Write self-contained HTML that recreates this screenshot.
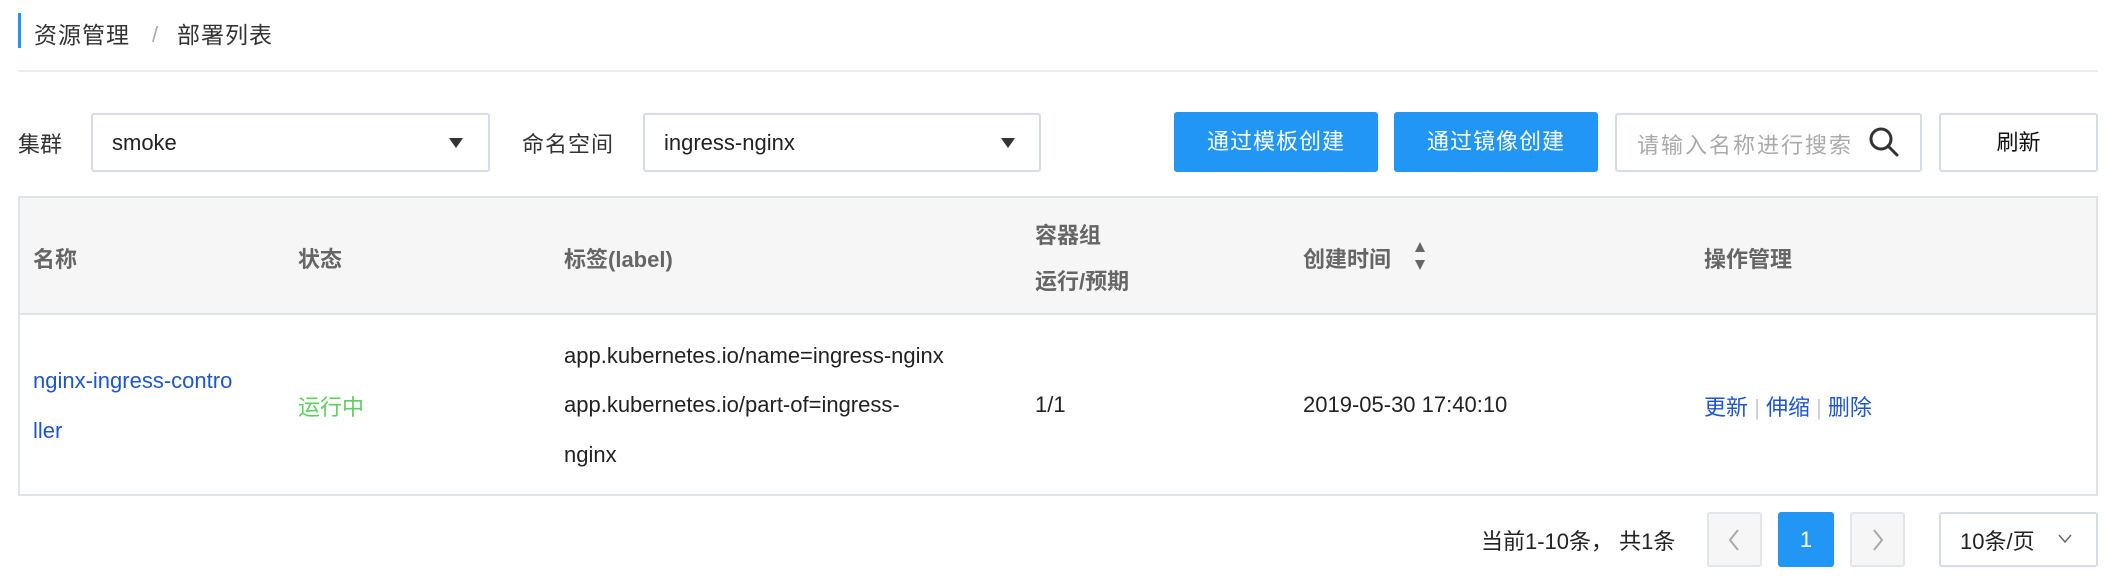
<!DOCTYPE html>
<html><head><meta charset="utf-8"><style>
*{box-sizing:border-box;margin:0;padding:0}
body{width:2124px;height:576px;background:#fff;font-family:"Liberation Sans","Noto Sans CJK SC",sans-serif;font-size:22px;color:#222;position:relative;overflow:hidden}
.a{position:absolute;white-space:nowrap}
.box{position:absolute;border:2px solid #d3dce8;border-radius:3px;background:#fff}
.btn{position:absolute;background:#2196f5;color:#fff;border-radius:3px;text-align:center;line-height:60px}
.th{position:absolute;color:#666;font-weight:bold;white-space:nowrap}
.tri{position:absolute;width:0;height:0;border-left:7px solid transparent;border-right:7px solid transparent;border-top:10px solid #333}
</style></head><body>
<div class="a" style="left:18px;top:13px;width:3px;height:35px;background:#2196f5"></div>
<div class="a" style="left:34px;top:16px;font-size:23px;color:#333;letter-spacing:1px">资源管理</div>
<div class="a" style="left:152px;top:22px;font-size:22px;color:#aaa">/</div>
<div class="a" style="left:177px;top:16px;font-size:23px;color:#333;letter-spacing:1px">部署列表</div>
<div class="a" style="left:18px;top:70px;width:2080px;height:2px;background:#ececec"></div>

<div class="a" style="left:18px;top:127px;color:#333">集群</div>
<div class="box" style="left:91px;top:113px;width:399px;height:59px"></div>
<div class="a" style="left:112px;top:130px">smoke</div>
<div class="tri" style="left:449px;top:138px"></div>
<div class="a" style="left:522px;top:127px;color:#333;letter-spacing:1px">命名空间</div>
<div class="box" style="left:643px;top:113px;width:398px;height:59px"></div>
<div class="a" style="left:664px;top:130px">ingress-nginx</div>
<div class="tri" style="left:1001px;top:138px"></div>

<div class="btn" style="left:1174px;top:112px;width:204px;height:60px;letter-spacing:1px">通过模板创建</div>
<div class="btn" style="left:1394px;top:112px;width:204px;height:60px;letter-spacing:1px">通过镜像创建</div>
<div class="box" style="left:1615px;top:113px;width:307px;height:59px"></div>
<div class="a" style="left:1637px;top:128px;color:#aaa;letter-spacing:2px">请输入名称进行搜索</div>
<svg class="a" style="left:1868px;top:126px" width="32" height="32" viewBox="0 0 32 32"><circle cx="13" cy="13" r="10" fill="none" stroke="#333" stroke-width="3"/><path d="M20 20 L29 29" stroke="#333" stroke-width="3" stroke-linecap="round"/></svg>
<div class="box" style="left:1939px;top:113px;width:159px;height:59px;text-align:center;line-height:55px;color:#111">刷新</div>

<div class="a" style="left:18px;top:196px;width:2080px;height:300px;border:2px solid #dfe3e8"></div>
<div class="a" style="left:20px;top:198px;width:2076px;height:117px;background:#f6f6f6;border-bottom:2px solid #dfe3e8"></div>
<div class="th" style="left:33px;top:242px">名称</div>
<div class="th" style="left:298px;top:242px">状态</div>
<div class="th" style="left:564px;top:242px">标签(label)</div>
<div class="th" style="left:1035px;top:218px">容器组</div>
<div class="th" style="left:1035px;top:264px">运行/预期</div>
<div class="th" style="left:1303px;top:242px">创建时间</div>
<svg class="a" style="left:1412px;top:240px" width="16" height="32"><path d="M8 2 L13 12 L3 12Z M8 30 L13 20 L3 20Z" fill="#666"/></svg>
<div class="th" style="left:1704px;top:242px">操作管理</div>

<div class="a" style="left:33px;top:368px;color:#1f55cc">nginx-ingress-contro</div>
<div class="a" style="left:33px;top:418px;color:#1f55cc">ller</div>
<div class="a" style="left:298px;top:390px;color:#5fcf5f">运行中</div>
<div class="a" style="left:564px;top:343px">app.kubernetes.io/name=ingress-nginx</div>
<div class="a" style="left:564px;top:392px">app.kubernetes.io/part-of=ingress-</div>
<div class="a" style="left:564px;top:442px">nginx</div>
<div class="a" style="left:1035px;top:392px">1/1</div>
<div class="a" style="left:1303px;top:392px">2019-05-30 17:40:10</div>
<div class="a" style="left:1704px;top:390px;color:#1f55cc">更新 <span style="color:#ccc">|</span> 伸缩 <span style="color:#ccc">|</span> 删除</div>

<div class="a" style="left:1481px;top:524px;color:#222">当前1-10条， 共1条</div>
<div class="box" style="left:1707px;top:512px;width:55px;height:55px;background:#f6f6f6;border-color:#e2e5ea"></div>
<svg class="a" style="left:1726px;top:528px" width="16" height="24"><path d="M12 2 L4 12 L12 22" fill="none" stroke="#aaa" stroke-width="2"/></svg>
<div class="btn" style="left:1778px;top:512px;width:56px;height:55px;line-height:55px">1</div>
<div class="box" style="left:1850px;top:512px;width:55px;height:55px;background:#f6f6f6;border-color:#e2e5ea"></div>
<svg class="a" style="left:1870px;top:528px" width="16" height="24"><path d="M4 2 L12 12 L4 22" fill="none" stroke="#aaa" stroke-width="2"/></svg>
<div class="box" style="left:1939px;top:512px;width:159px;height:55px"></div>
<div class="a" style="left:1960px;top:524px">10条/页</div>
<svg class="a" style="left:2058px;top:534px" width="14" height="10"><path d="M1 1 L7 8 L13 1" fill="none" stroke="#666" stroke-width="1.5"/></svg>
</body></html>
